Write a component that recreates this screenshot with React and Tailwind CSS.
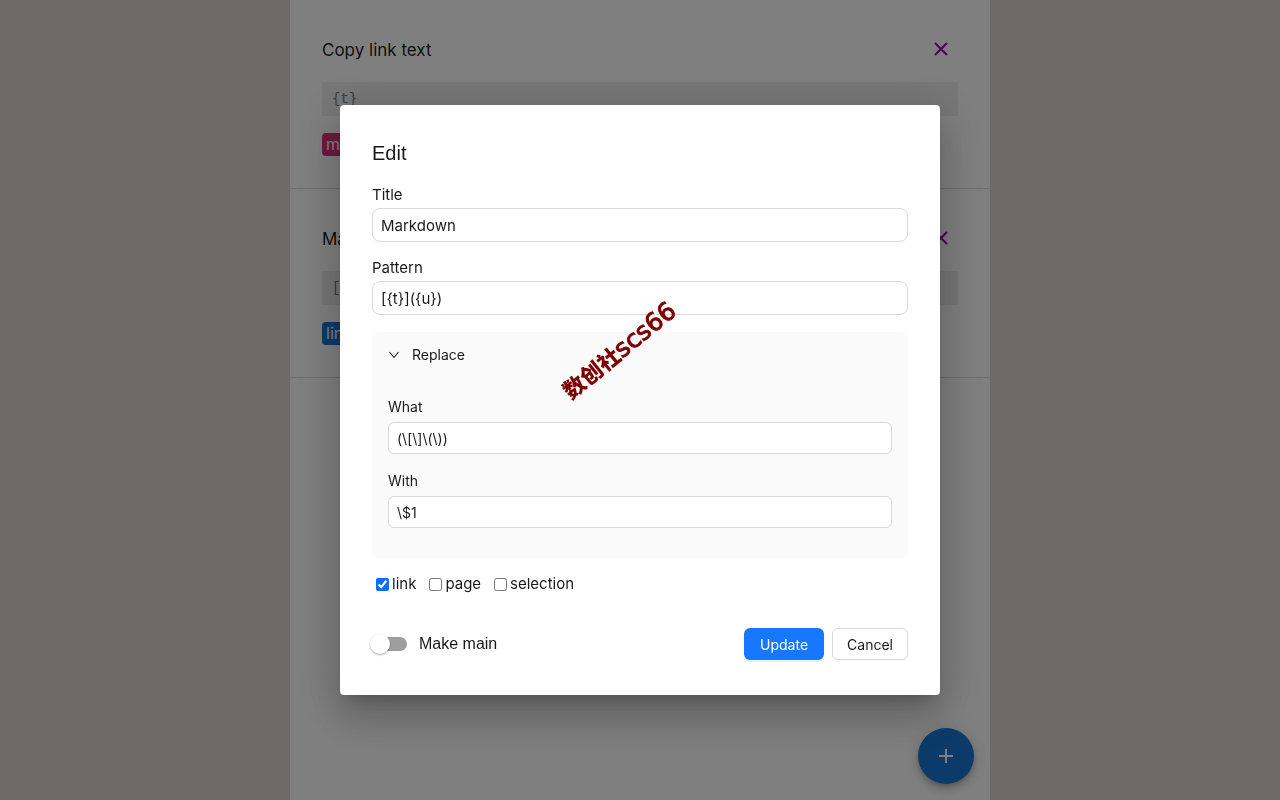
import React, { useState } from 'react';

const patterns = [
    { id: 1, title: 'Copy link text', pattern: '{t}', tag: 'main', tagClass: 'bg-[#e0307d]' },
    { id: 2, title: 'Markdown', pattern: '[{t}]({u})', tag: 'link', tagClass: 'bg-[#1976d2]' },
];

const PatternCard = ({ item }) => (
    <div className="border-b border-[#dedede] p-8">
        <div className="flex items-center justify-between h-[34px]">
            <h2 className="pt-0.5 text-[17px] leading-6 text-black/90">{item.title}</h2>
            <button type="button" aria-label={`Remove ${item.title}`} className="flex h-[34px] w-[34px] items-center justify-center text-[#9c00b0]">
                <svg width="14" height="14" viewBox="0 0 14 14" fill="none" stroke="currentColor" strokeWidth="2" aria-hidden="true">
                    <path d="M1 1l12 12M13 1L1 13" />
                </svg>
            </button>
        </div>
        <pre className="mt-4 h-[34px] bg-[#eee] px-2.5 font-['Liberation_Mono',monospace] text-[14px] leading-[34px] text-[#777]">{item.pattern}</pre>
        <div className="mt-4 flex h-6 items-center">
            <span className={`rounded-[4px] px-1 text-[16px] leading-[23px] text-white ${item.tagClass}`}>{item.tag}</span>
        </div>
    </div>
);

const Field = ({ id, label, value, onChange, small }) => (
    <div>
        <label htmlFor={id} className={small ? 'block text-[14px] leading-[30px]' : 'block text-[15px] leading-[26px]'}>{label}</label>
        <input
            id={id}
            type="text"
            value={value}
            onChange={(e) => onChange(e.target.value)}
            className={`block w-full border border-[#d9d9d9] bg-white px-2 outline-none ${small ? 'h-8 rounded-[6px] text-[14px]' : 'h-[34px] rounded-[8px] text-[15px]'}`}
        />
    </div>
);

const Check = ({ id, label, checked, onChange }) => (
    <div className="flex items-center gap-[3px]">
        <input id={id} type="checkbox" checked={checked} onChange={(e) => onChange(e.target.checked)} className="h-[13px] w-[13px] accent-[#0d6efd]" />
        <label htmlFor={id} className="text-[15px] leading-6">{label}</label>
    </div>
);

const EditDialog = () => {
    const [form, setForm] = useState({
        title: 'Markdown',
        pattern: '[{t}]({u})',
        what: '(\\[\\]\\(\\))',
        replaceWith: '\\$1',
        link: true,
        page: false,
        selection: false,
        main: false,
    });
    const [open, setOpen] = useState(true);

    const update = (key) => (value) => setForm({ ...form, [key]: value });

    return (
        <div role="dialog" aria-modal="true" aria-labelledby="dialog-title" className="relative w-full max-w-[600px] rounded-[4px] bg-white px-8 pt-8 pb-[35px] text-black/90 shadow-[0_11px_15px_-7px_rgba(0,0,0,0.2),0_24px_38px_3px_rgba(0,0,0,0.14),0_9px_46px_8px_rgba(0,0,0,0.12)]">
            <h1 id="dialog-title" className="font-['Liberation_Sans',sans-serif] text-[20px] leading-8">Edit</h1>
            <div className="mt-[13px] flex flex-col gap-[13px]">
                <Field id="title" label="Title" value={form.title} onChange={update('title')} />
                <Field id="pattern" label="Pattern" value={form.pattern} onChange={update('pattern')} />
            </div>

            <div className="mt-[17px] rounded-[8px] bg-[#fafafa] px-4 pt-3 pb-[30px]">
                <button type="button" onClick={() => setOpen(!open)} className="flex w-full items-center gap-3 text-[14px] leading-[22px]">
                    <span className="flex w-3 justify-center">
                        <svg width="10" height="8" viewBox="0 0 10 8" fill="none" stroke="currentColor" strokeWidth="1.1" aria-hidden="true">
                            <path d="M0.5 1L5 6.5L9.5 1" />
                        </svg>
                    </span>
                    Replace
                </button>
                {open && (
                    <div className="mt-[26px] flex flex-col gap-3">
                        <Field id="what" label="What" value={form.what} onChange={update('what')} small />
                        <Field id="with" label="With" value={form.replaceWith} onChange={update('replaceWith')} small />
                    </div>
                )}
            </div>

            <div className="mt-[14px] flex gap-[13px] px-1">
                <Check id="link" label="link" checked={form.link} onChange={update('link')} />
                <Check id="page" label="page" checked={form.page} onChange={update('page')} />
                <Check id="selection" label="selection" checked={form.selection} onChange={update('selection')} />
            </div>

            <div className="mt-8 flex items-center justify-between">
                <label className="-ml-0.5 flex items-center gap-3 font-['Liberation_Sans',sans-serif] text-[16px]">
                    <input type="checkbox" role="switch" checked={form.main} onChange={(e) => update('main')(e.target.checked)} className="peer sr-only" />
                    <span className="flex h-5 w-[37px] items-center">
                        <span className="z-10 h-5 w-5 shrink-0 rounded-full bg-white shadow-[0_1px_2px_rgba(0,0,0,0.35)]" />
                        <span className="-ml-3 h-[14px] flex-1 rounded-r-full bg-[#9e9e9e]" />
                    </span>
                    Make main
                </label>
                <div className="flex gap-2 text-[14px]">
                    <button type="button" className="h-8 rounded-[6px] bg-[#1677ff] px-4 text-white shadow-[0_2px_0_rgba(5,145,255,0.1)]">Update</button>
                    <button type="button" className="h-8 rounded-[6px] border border-[#d9d9d9] bg-white px-[14px] shadow-[0_2px_0_rgba(0,0,0,0.02)]">Cancel</button>
                </div>
            </div>

            <span className="absolute left-[210px] top-[228px] flex -rotate-[39deg] items-baseline whitespace-nowrap leading-8 text-[#7d0000]">
                <span className="font-['Noto_Sans_CJK_SC',sans-serif] text-[22px] font-black">数创社</span>
                <span className="font-['DejaVu_Sans',sans-serif] text-[25px] [-webkit-text-stroke:1px_#7d0000]">scs66</span>
            </span>
        </div>
    );
};

const App = () => (
    <div className="relative min-h-screen bg-[#e0d2d2] font-[Inter,sans-serif]">
        <main className="mx-auto min-h-screen max-w-[700px] bg-white">
            {patterns.map((item) => (
                <PatternCard key={item.id} item={item} />
            ))}
        </main>
        <div className="fixed inset-x-0 bottom-4 mx-auto flex max-w-[700px] justify-end px-4">
            <button type="button" aria-label="Add pattern" className="flex h-14 w-14 items-center justify-center rounded-full bg-[#1976d2] text-white shadow-[0_3px_5px_-1px_rgba(0,0,0,0.2),0_6px_10px_rgba(0,0,0,0.14),0_1px_18px_rgba(0,0,0,0.12)]">
                <svg width="24" height="24" viewBox="0 0 24 24" fill="currentColor" aria-hidden="true">
                    <path d="M19 13h-6v6h-2v-6H5v-2h6V5h2v6h6v2z" />
                </svg>
            </button>
        </div>
        <div className="fixed inset-0 flex items-center justify-center bg-black/50">
            <EditDialog />
        </div>
    </div>
);

export default App;
